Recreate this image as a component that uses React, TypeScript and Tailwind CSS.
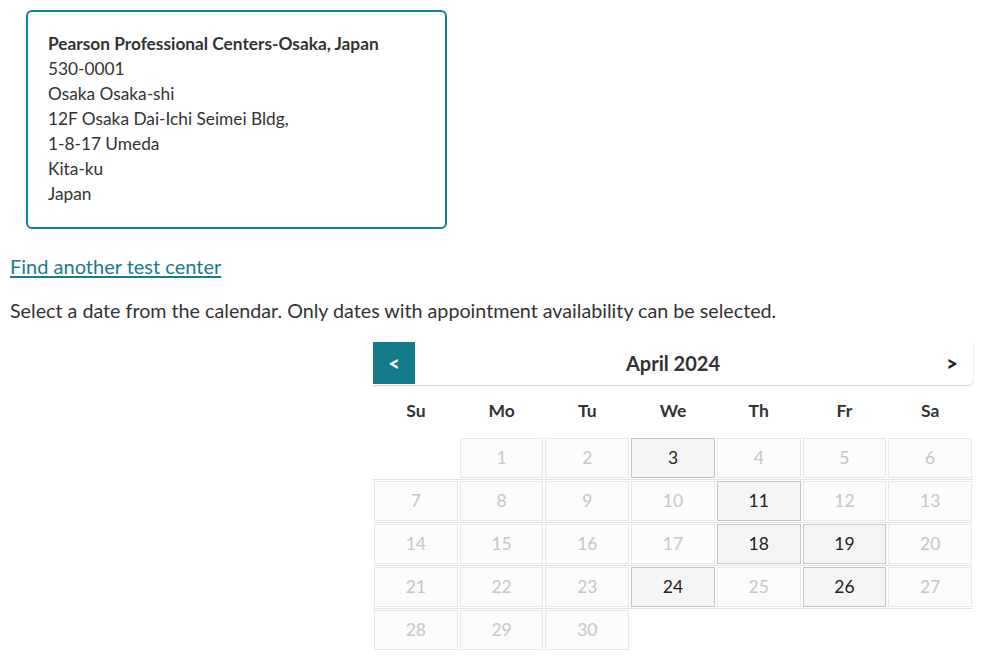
const weeks: (number | null)[][] = [
  [null, 1, 2, 3, 4, 5, 6],
  [7, 8, 9, 10, 11, 12, 13],
  [14, 15, 16, 17, 18, 19, 20],
  [21, 22, 23, 24, 25, 26, 27],
  [28, 29, 30, null, null, null, null],
];

const available = [3, 11, 18, 19, 24, 26];
const dayNames = ["Su", "Mo", "Tu", "We", "Th", "Fr", "Sa"];

const App = () => {
  return (
    <div className="min-h-screen bg-white px-[10px] pt-[10px] font-['Lato',sans-serif] text-[#333]">
      {/* adresse du centre */}
      <div className="ml-4 w-[421px] rounded-md border-2 border-[#127f95] px-5 pt-[19px] pb-[21px] text-[17.3px] leading-[25px]">
        <div className="font-bold">Pearson Professional Centers-Osaka, Japan</div>
        <div>530-0001</div>
        <div>Osaka Osaka-shi</div>
        <div>12F Osaka Dai-Ichi Seimei Bldg,</div>
        <div>1-8-17 Umeda</div>
        <div>Kita-ku</div>
        <div>Japan</div>
      </div>

      <div className="mt-[25px]">
        <a href="#" className="text-[20px] leading-6 text-[#1a7b8a] underline underline-offset-2">
          Find another test center
        </a>
      </div>

      <p className="mt-[19px] text-[19.7px] leading-6">
        Select a date from the calendar. Only dates with appointment availability can be selected.
      </p>

      {/* calendrier */}
      <div className="mt-[19px] ml-[363px] w-[600px]">
        <div className="flex h-[44px] items-start rounded-br-md border-b border-[#dcdcdc] shadow-[1px_1px_1px_rgba(0,0,0,0.06)]">
          <button
            type="button"
            className="flex h-[42px] w-[42px] items-center justify-center bg-[#147b8a] text-[20px] font-black text-white"
          >
            &lt;
          </button>
          <div className="flex h-[42px] flex-1 items-center justify-center text-[20px] font-bold">
            April 2024
          </div>
          <button
            type="button"
            className="flex h-[42px] w-[42px] items-center justify-center text-[20px] font-black text-[#222]"
          >
            &gt;
          </button>
        </div>

        <div className="grid h-[51px] grid-cols-7 items-center text-center text-[17.5px] font-bold">
          {dayNames.map((d) => (
            <div key={d}>{d}</div>
          ))}
        </div>

        <div className="flex flex-col">
          {weeks.map((week, i) => (
            <div
              key={i}
              className={
                i === 0
                  ? "grid grid-cols-7"
                  : "grid grid-cols-7 border-t border-[#e2e2e2]"
              }
            >
              {week.map((day, j) => (
                <div key={j} className="px-[1px] py-[1px]">
                  {day === null ? (
                    <div className="h-[40px]" />
                  ) : available.includes(day) ? (
                    <button
                      type="button"
                      className="flex h-[40px] w-full items-center justify-center border border-[#c4c4c4] bg-[#f5f5f5] text-[17.5px] text-[#222]"
                    >
                      {day}
                    </button>
                  ) : (
                    <div className="flex h-[40px] w-full items-center justify-center border border-[#e8e8e8] bg-[#fcfcfc] text-[17.5px] text-[#c6c6c6]">
                      {day}
                    </div>
                  )}
                </div>
              ))}
            </div>
          ))}
        </div>
      </div>
    </div>
  );
};

export default App;
